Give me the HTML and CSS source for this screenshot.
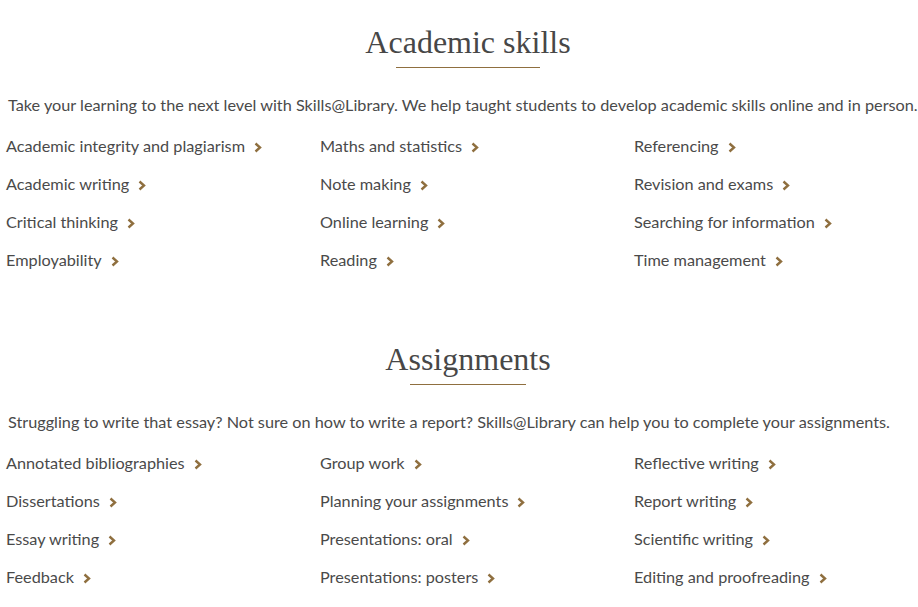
FILE: index.html
```html
<!DOCTYPE html>
<html lang="en">
<head>
  <meta charset="UTF-8" />
  <meta name="viewport" content="width=device-width, initial-scale=1.0"/>
  <title>Skills@Library</title>
  <link rel="stylesheet" href="styles.css">
</head>
<body>
  <div class="page">
    <section class="skills">
      <div class="heading"><h2>Academic skills</h2></div>
      <p class="intro">Take your learning to the next level with Skills@Library. We help taught students to develop academic skills online and in person.</p>
      <ul class="links">
        <li><a href="#">Academic integrity and plagiarism</a></li>
        <li><a href="#">Maths and statistics</a></li>
        <li><a href="#">Referencing</a></li>
        <li><a href="#">Academic writing</a></li>
        <li><a href="#">Note making</a></li>
        <li><a href="#">Revision and exams</a></li>
        <li><a href="#">Critical thinking</a></li>
        <li><a href="#">Online learning</a></li>
        <li><a href="#">Searching for information</a></li>
        <li><a href="#">Employability</a></li>
        <li><a href="#">Reading</a></li>
        <li><a href="#">Time management</a></li>
      </ul>
    </section>

    <section class="skills">
      <div class="heading"><h2>Assignments</h2></div>
      <p class="intro">Struggling to write that essay? Not sure on how to write a report? Skills@Library can help you to complete your assignments.</p>
      <ul class="links">
        <li><a href="#">Annotated bibliographies</a></li>
        <li><a href="#">Group work</a></li>
        <li><a href="#">Reflective writing</a></li>
        <li><a href="#">Dissertations</a></li>
        <li><a href="#">Planning your assignments</a></li>
        <li><a href="#">Report writing</a></li>
        <li><a href="#">Essay writing</a></li>
        <li><a href="#">Presentations: oral</a></li>
        <li><a href="#">Scientific writing</a></li>
        <li><a href="#">Feedback</a></li>
        <li><a href="#">Presentations: posters</a></li>
        <li><a href="#">Editing and proofreading</a></li>
      </ul>
    </section>
  </div>

  <script>
    // add the gold chevron after every link
    document.querySelectorAll(".links a").forEach(link => {
      link.insertAdjacentHTML("beforeend",
        '<svg class="chevron" width="8" height="11" viewBox="0 0 8 11"><polyline points="1.5,1.5 6,5.5 1.5,9.5" /></svg>');
    });
  </script>
</body>
</html>
```

FILE: styles.css
```css
html, body {
  overflow: hidden;
}

body {
  margin: 0;
  background: #fff;
  color: #4a4a4a;
  font-family: Lato, "Open Sans", sans-serif;
  font-size: 16.25px;
}

.page {
  width: 936px;
}

.skills {
  padding-top: 22px;
  margin-bottom: 38px;
}

.heading {
  text-align: center;
}

h2 {
  display: inline-block;
  margin: 0;
  font-family: "Liberation Serif", "DejaVu Serif", serif;
  font-size: 32px;
  font-weight: normal;
  line-height: 40px;
  color: #474747;
}

h2::after {
  content: "";
  display: block;
  width: 70%;
  height: 1px;
  margin: 5px auto 0;
  background: #8f6f3f;
}

.intro {
  margin: 25px 0 10px 8px;
  line-height: 24px;
  white-space: nowrap;
}

.links {
  list-style: none;
  margin: 0;
  padding: 0 0 0 6px;
  display: grid;
  grid-template-columns: repeat(3, 314px);
}

.links li {
  line-height: 38px;
}

.links a {
  color: #4a4a4a;
  text-decoration: none;
}

.chevron {
  margin-left: 9px;
  vertical-align: -1px;
}

.chevron polyline {
  fill: none;
  stroke: #8f6f3f;
  stroke-width: 2.4;
}
```
